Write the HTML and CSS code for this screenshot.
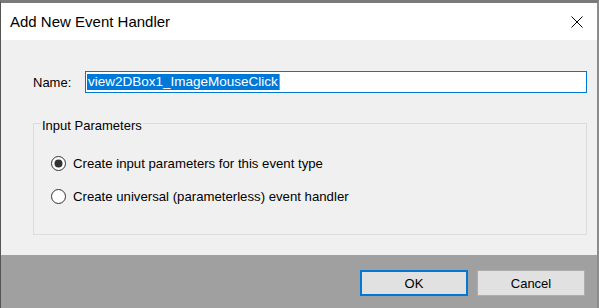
FILE: index.html
```html
<!DOCTYPE html>
<html lang="en">
<head>
    <meta charset="UTF-8">
    <title>Add New Event Handler</title>
    <link rel="stylesheet" href="styles.css">
</head>
<body>

    <div class="dialog">
        <header class="titlebar">
            <span class="title">Add New Event Handler</span>
            <svg class="close" width="12" height="12" viewBox="0 0 12 12">
                <path d="M0.5 0.5 L11.5 11.5 M11.5 0.5 L0.5 11.5" stroke="#000" stroke-width="1" fill="none"/>
            </svg>
        </header>

        <main class="content">
            <div class="name-row">
                <label class="name-label">Name:</label>
                <div class="textbox"><span class="selected">view2DBox1_ImageMouseClick</span><span class="caret"></span></div>
            </div>

            <fieldset class="group">
                <legend>Input Parameters</legend>
                <div class="radio-list">
                    <div class="radio">
                        <svg width="15" height="15" viewBox="0 0 15 15">
                            <circle cx="7.5" cy="7.5" r="7" fill="#fff" stroke="#333" stroke-width="1"/>
                            <circle cx="7.5" cy="7.5" r="4" fill="#333"/>
                        </svg>
                        <span>Create input parameters for this event type</span>
                    </div>
                    <div class="radio">
                        <svg width="15" height="15" viewBox="0 0 15 15">
                            <circle cx="7.5" cy="7.5" r="7" fill="#fff" stroke="#333" stroke-width="1"/>
                        </svg>
                        <span>Create universal (parameterless) event handler</span>
                    </div>
                </div>
            </fieldset>
        </main>

        <footer class="footer">
            <button class="btn btn-default">OK</button>
            <button class="btn">Cancel</button>
        </footer>
    </div>

</body>
</html>
```

FILE: styles.css
```css
body {
    margin: 0;
    font-family: "Liberation Sans", Arial, sans-serif;
    font-size: 13px;
    color: #000;
    background-color: #a0a0a0;
}

.dialog {
    width: 599px;
    height: 308px;
    box-sizing: border-box;
    border-top: 3px solid #7a7a7a;
    border-left: 1px solid #555;
    border-right: 2px solid #8c8c8c;
    display: flex;
    flex-direction: column;
}

/* Title bar */
.titlebar {
    height: 37px;
    background-color: #fff;
    display: flex;
    align-items: center;
    padding: 0 14px 0 9px;
}

.title {
    font-size: 15px;
}

.close {
    margin-left: auto;
    display: block;
}

/* Body */
.content {
    height: 215px;
    background-color: #f0f0f0;
    padding: 31px 0 0 32px;
    box-sizing: border-box;
}

.name-row {
    display: flex;
    align-items: center;
}

.name-label {
    width: 52px;
}

.textbox {
    width: 502px;
    height: 22px;
    box-sizing: border-box;
    border: 1px solid #0078d7;
    background-color: #fff;
    padding: 2px 1px;
    display: flex;
}

.selected {
    background-color: #0078d7;
    color: #fff;
    font-size: 13.5px;
    line-height: 16px;
    height: 16px;
    padding: 0 1px;
}

.caret {
    width: 1px;
    height: 16px;
    background-color: #e0893a;
}

/* Group box */
.group {
    width: 554px;
    box-sizing: border-box;
    margin: 20px 0 0 0;
    padding: 0 0 28px 0;
    border: 1px solid #dcdcdc;
    min-inline-size: 0;
}

.group legend {
    margin-left: 7px;
    padding: 5px 1px 0 1px;
    line-height: 15px;
}

.radio-list {
    display: flex;
    flex-direction: column;
    gap: 13px;
    padding: 20px 0 0 17px;
}

.radio {
    display: flex;
    align-items: center;
    gap: 7px;
    height: 20px;
    font-size: 13.2px;
}

.radio svg {
    display: block;
}

/* Footer buttons */
.footer {
    flex: 1;
    background-color: #a0a0a0;
    display: flex;
    justify-content: flex-end;
    align-items: flex-start;
    gap: 9px;
    padding: 15px 12px 0 0;
}

.btn {
    width: 108px;
    height: 26px;
    box-sizing: border-box;
    background-color: #e1e1e1;
    border: 1px solid #adadad;
    font-family: inherit;
    font-size: 13px;
    color: #000;
    padding: 0;
}

.btn-default {
    border: 2px solid #0078d7;
}
```
